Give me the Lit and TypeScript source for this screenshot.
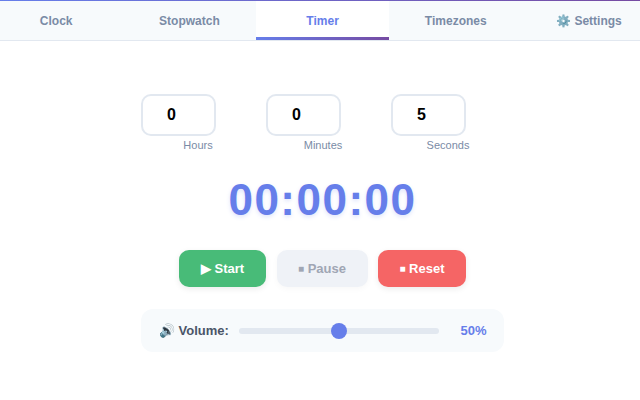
import { LitElement, html, css } from "lit";
import { customElement } from "lit/decorators.js";

const TABS = ["Clock", "Stopwatch", "Timer", "Timezones", "⚙️ Settings"];
const FIELDS = [["0", "Hours"], ["0", "Minutes"], ["5", "Seconds"]];

@customElement("app-root")
export class AppRoot extends LitElement {
  static styles = css`
    :host { display: block; width: 640px; height: 400px; overflow: hidden; background: #fff;
      font-family: "Liberation Sans", Arial, sans-serif; }
    .accent { height: 1px; background: linear-gradient(90deg, #667eea, #764ba2); }
    .bar { background: #f7fafc; border-bottom: 1px solid #e2e8f0; height: 39px; overflow: hidden; box-sizing: content-box; }
    .tabs { display: grid; grid-template-columns: repeat(5, 133.2px); margin-left: -10.4px; height: 100%; }
    .tab { display: flex; align-items: center; justify-content: center; font-size: 12px; font-weight: 700; color: #7a8ba6; box-sizing: border-box; position: relative; }
    .tab.active { background: #fff; color: #667eea; }
    .tab.active::after { content: ""; position: absolute; left: 0; right: 0; bottom: 0; height: 3px; background: linear-gradient(90deg, #667eea, #764ba2); }
    main { width: 363px; padding-top: 53px; margin-left: 141px; }
    .fields { display: grid; grid-template-columns: repeat(3, 74.5px); column-gap: 50.5px; }
    .field { width: 74.5px; }
    .box { box-sizing: border-box; height: 42px; border: 2px solid #e2e8f0; border-radius: 10px; background: #fff; font-size: 16px; font-weight: 700; color: #000; display: flex; align-items: center; padding-left: 24px; padding-bottom: 1px; }
    .label { width: 114px; text-align: center; font-size: 11px; color: #7a8ba6; margin-top: 2px; line-height: 14px; }
    .time { text-align: center; font-size: 44px; font-weight: 700; color: #667eea; letter-spacing: 1.5px; text-shadow: 0 2px 4px rgba(102,126,234,.2); line-height: 53px; margin-top: 21px; }
    .buttons { display: flex; justify-content: center; gap: 10.5px; margin-top: 24px; }
    .btn { height: 37px; border-radius: 10px; display: flex; align-items: center; justify-content: center; font-size: 13px; font-weight: 700; color: #fff; box-shadow: 0 2px 6px rgba(0,0,0,.08); padding-bottom: 1px; box-sizing: border-box; white-space: pre; }
    .sq { font-size: 10px; }
    .start { width: 87px; background: #48bb78; }
    .pause { width: 91px; background: #eff2f7; color: #a0a6b4; box-shadow: 0 2px 6px rgba(0,0,0,.03); }
    .reset { width: 88px; background: #f56565; }
    .volume { margin-top: 22px; height: 43px; box-sizing: border-box; background: #f7fafc; border-radius: 12px; display: flex; align-items: center; padding: 0 17.5px 0 18px; font-size: 13px; font-weight: 700; color: #4a5568; }
    .vlabel { width: 80px; white-space: nowrap; }
    .track { position: relative; width: 200px; height: 6px; border-radius: 3px; background: #e2e8f0; }
    .thumb { position: absolute; left: 92px; top: -5px; width: 16px; height: 16px; border-radius: 50%; background: #667eea; }
    .val { margin-left: auto; color: #667eea; font-size: 13px; }
  `;

  render() {
    return html`
      <div class="accent"></div>
      <div class="bar"><div class="tabs">
        ${TABS.map((t) => html`<div class="tab ${t === "Timer" ? "active" : ""}">${t}</div>`)}
      </div></div>
      <main>
        <div class="fields">
          ${FIELDS.map(([v, l]) => html`<div class="field"><div class="box">${v}</div><div class="label">${l}</div></div>`)}
        </div>
        <div class="time">00:00:00</div>
        <div class="buttons">
          <div class="btn start">▶ Start</div>
          <div class="btn pause"><span class="sq">■</span> Pause</div>
          <div class="btn reset"><span class="sq">■</span> Reset</div>
        </div>
        <div class="volume">
          <div class="vlabel">🔊 Volume:</div>
          <div class="track"><div class="thumb"></div></div>
          <div class="val">50%</div>
        </div>
      </main>
    `;
  }
}
